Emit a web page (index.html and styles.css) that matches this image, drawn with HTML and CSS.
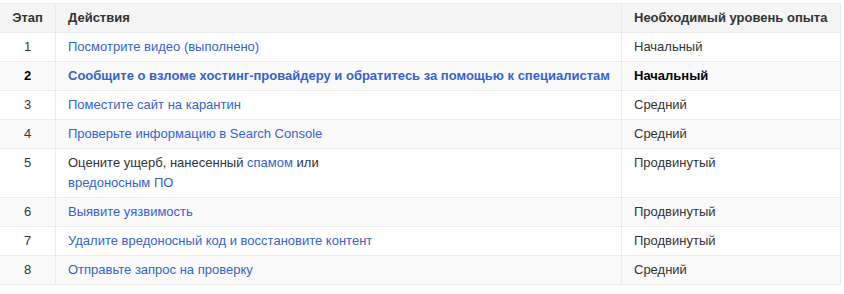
FILE: index.html
```html
<!DOCTYPE html>
<html lang="ru">
<head>
<meta charset="utf-8">
<link rel="stylesheet" href="styles.css">
</head>
<body>
<table class="steps">
  <thead>
    <tr><th class="num">Этап</th><th>Действия</th><th>Необходимый уровень опыта</th></tr>
  </thead>
  <tbody>
    <tr><td class="num">1</td><td><a href="#">Посмотрите видео (выполнено)</a></td><td>Начальный</td></tr>
    <tr class="current"><td class="num">2</td><td class="tight"><a href="#">Сообщите о взломе хостинг-провайдеру и обратитесь за помощью к специалистам</a></td><td>Начальный</td></tr>
    <tr><td class="num">3</td><td><a href="#">Поместите сайт на карантин</a></td><td>Средний</td></tr>
    <tr><td class="num">4</td><td><a href="#">Проверьте информацию в Search Console</a></td><td>Средний</td></tr>
    <tr><td class="num">5</td><td>Оцените ущерб, нанесенный <a href="#">спамом</a> или<br><a href="#">вредоносным ПО</a></td><td>Продвинутый</td></tr>
    <tr><td class="num">6</td><td><a href="#">Выявите уязвимость</a></td><td>Продвинутый</td></tr>
    <tr><td class="num">7</td><td><a href="#">Удалите вредоносный код и восстановите контент</a></td><td>Продвинутый</td></tr>
    <tr><td class="num">8</td><td><a href="#">Отправьте запрос на проверку</a></td><td>Средний</td></tr>
  </tbody>
</table>
</body>
</html>
```
FILE: styles.css
```css
html, body {
  margin: 0;
  padding: 0;
  background: #fff;
}
body {
  padding-top: 3px;
  font-family: "Liberation Sans", Arial, sans-serif;
  font-size: 13px;
  line-height: 20px;
  color: #333;
}
.steps {
  border-collapse: collapse;
  table-layout: fixed;
  width: 841px;
  border: 1px solid #ebebeb;
  border-left: none;
}
.steps th,
.steps td {
  border: 1px solid #ebebeb;
  padding: 4px 12px;
  text-align: left;
  vertical-align: top;
}
.steps th:first-child,
.steps td:first-child {
  border-left: none;
}
.steps th {
  background: #f5f5f5;
  font-weight: 700;
  color: #333;
}
.steps .num {
  width: 31px;
  text-align: center;
}
.steps th:last-child,
.steps td:last-child {
  width: 194px;
}
.steps tbody tr:nth-child(even) {
  background: #fafafa;
}
.steps a {
  color: #3563c9;
  text-decoration: none;
}
.steps .current td {
  font-weight: 700;
  color: #000;
}
.steps .current .tight {
  white-space: nowrap;
}
```
